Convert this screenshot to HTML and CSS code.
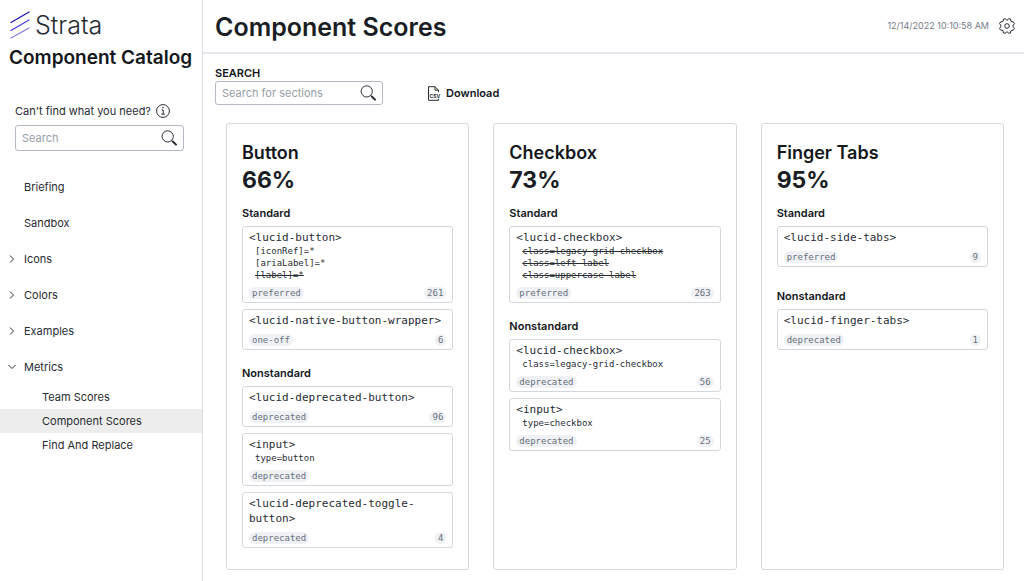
FILE: index.html
```
<!DOCTYPE html>
<html lang="en">
<head>
  <meta charset="UTF-8" />
  <meta name="viewport" content="width=device-width, initial-scale=1.0" />
  <title>Strata - Component Scores</title>
  <link rel="stylesheet" href="styles.css">
</head>
<body>

  <!-- Sidebar -->
  <aside class="sidebar">
    <div class="brand">
      <svg class="brand-mark" viewBox="0 0 20 28" fill="none" stroke-width="1.4" stroke-linecap="round">
        <path d="M1 11.5L19 1" stroke="#1f1cae" />
        <path d="M1 19.5L19 9" stroke="#4a43e6" />
        <path d="M1 27L19 17" stroke="#8580f5" />
      </svg>
      <span class="brand-name">Strata</span>
    </div>
    <h2 class="catalog-title">Component Catalog</h2>

    <div class="side-search">
      <div class="side-label">
        <label for="sideSearch">Can't find what you need?</label>
        <svg class="info-icon" viewBox="0 0 14 14" fill="none" stroke="#282c33">
          <circle cx="7" cy="7" r="6.4" />
          <path d="M5.6 6h1.6v4M5.3 10.2h3.6" />
          <circle cx="7" cy="3.8" r=".8" fill="#282c33" stroke="none" />
        </svg>
      </div>
      <div class="search-box">
        <input type="text" id="sideSearch" placeholder="Search" />
        <svg class="search-icon" viewBox="0 0 16 16" fill="none" stroke="#282c33">
          <circle cx="6.7" cy="6.4" r="5.6" />
          <path d="M10.7 10.4l1 1" />
          <path d="M11.8 11.5l3.2 3.1" stroke-width="2" stroke-linecap="round" />
        </svg>
      </div>
    </div>

    <nav>
      <ul class="nav">
        <li><a href="#">Briefing</a></li>
        <li><a href="#">Sandbox</a></li>
        <li><a href="#"><svg class="chevron" viewBox="0 0 8 8"><path d="M2 .5L5.5 4 2 7.5" /></svg>Icons</a></li>
        <li><a href="#"><svg class="chevron" viewBox="0 0 8 8"><path d="M2 .5L5.5 4 2 7.5" /></svg>Colors</a></li>
        <li><a href="#"><svg class="chevron" viewBox="0 0 8 8"><path d="M2 .5L5.5 4 2 7.5" /></svg>Examples</a></li>
        <li>
          <a href="#"><svg class="chevron" viewBox="0 0 8 8"><path d="M.5 2L4 5.5 7.5 2" /></svg>Metrics</a>
          <ul class="subnav">
            <li><a href="#">Team Scores</a></li>
            <li><a href="#" class="active">Component Scores</a></li>
            <li><a href="#">Find And Replace</a></li>
          </ul>
        </li>
      </ul>
    </nav>
  </aside>

  <div class="page">
    <header class="topbar">
      <h1>Component Scores</h1>
      <time class="timestamp">12/14/2022 10:10:58 AM</time>
      <button class="icon-btn" aria-label="Settings">
        <svg class="gear" viewBox="0 0 16 16" fill="none" stroke="#282c33" stroke-linejoin="round">
          <path d="M4.500 1L6.500.8 8 2.500 9.500.8l2 .2.5 2.500 2.500.5.900 1.500L13.800 8l1.600 2.500-.9 1.500-2.500.5-.5 2.500-2 .2L8 13.500l-1.500 1.700-2-.2-.5-2.500-2.500-.5-.9-1.500L2.200 8 .6 5.500 1.500 4 4 3.500z" />
          <circle cx="8" cy="8" r="2.3" />
        </svg>
      </button>
    </header>

    <main>
      <!-- Search and export -->
      <div class="toolbar">
        <div class="section-search">
          <label for="sectionSearch">SEARCH</label>
          <div class="search-box">
            <input type="text" id="sectionSearch" placeholder="Search for sections" />
            <svg class="search-icon" viewBox="0 0 16 16" fill="none" stroke="#282c33">
              <circle cx="6.7" cy="6.4" r="5.6" />
              <path d="M10.7 10.4l1 1" />
              <path d="M11.8 11.5l3.2 3.1" stroke-width="2" stroke-linecap="round" />
            </svg>
          </div>
        </div>
        <button class="download-btn">
          <svg class="csv-icon" viewBox="0 0 14 15">
            <path d="M1.5 13.5V.7H8l3.500 3.500v2M8 .7v3.500h3.500M1.500 13.500v.8h10v-1.500" fill="none" stroke="#282c33" />
            <text x="2.500" y="12" class="csv-text">CSV</text>
          </svg>
          Download
        </button>
      </div>

      <!-- Score cards -->
      <div class="cards">
        <section class="card">
          <h2>Button</h2>
          <p class="score">66%</p>

          <h3>Standard</h3>
          <div class="items">
            <div class="item">
              <div class="tag">&lt;lucid-button&gt;</div>
              <ul class="attrs">
                <li>[iconRef]=*</li>
                <li>[ariaLabel]=*</li>
                <li><s>[label]=*</s></li>
              </ul>
              <div class="meta"><span class="badge">preferred</span><span class="badge">261</span></div>
            </div>
            <div class="item">
              <div class="tag">&lt;lucid-native-button-wrapper&gt;</div>
              <div class="meta"><span class="badge">one-off</span><span class="badge">6</span></div>
            </div>
          </div>

          <h3>Nonstandard</h3>
          <div class="items">
            <div class="item">
              <div class="tag">&lt;lucid-deprecated-button&gt;</div>
              <div class="meta"><span class="badge">deprecated</span><span class="badge">96</span></div>
            </div>
            <div class="item">
              <div class="tag">&lt;input&gt;</div>
              <ul class="attrs">
                <li>type=button</li>
              </ul>
              <div class="meta"><span class="badge">deprecated</span></div>
            </div>
            <div class="item">
              <div class="tag">&lt;lucid-deprecated-toggle-button&gt;</div>
              <div class="meta"><span class="badge">deprecated</span><span class="badge">4</span></div>
            </div>
          </div>
        </section>

        <section class="card">
          <h2>Checkbox</h2>
          <p class="score">73%</p>

          <h3>Standard</h3>
          <div class="items">
            <div class="item">
              <div class="tag">&lt;lucid-checkbox&gt;</div>
              <ul class="attrs">
                <li><s>class=legacy-grid-checkbox</s></li>
                <li><s>class=left-label</s></li>
                <li><s>class=uppercase-label</s></li>
              </ul>
              <div class="meta"><span class="badge">preferred</span><span class="badge">263</span></div>
            </div>
          </div>

          <h3>Nonstandard</h3>
          <div class="items">
            <div class="item">
              <div class="tag">&lt;lucid-checkbox&gt;</div>
              <ul class="attrs">
                <li>class=legacy-grid-checkbox</li>
              </ul>
              <div class="meta"><span class="badge">deprecated</span><span class="badge">56</span></div>
            </div>
            <div class="item">
              <div class="tag">&lt;input&gt;</div>
              <ul class="attrs">
                <li>type=checkbox</li>
              </ul>
              <div class="meta"><span class="badge">deprecated</span><span class="badge">25</span></div>
            </div>
          </div>
        </section>

        <section class="card">
          <h2>Finger Tabs</h2>
          <p class="score">95%</p>

          <h3>Standard</h3>
          <div class="items">
            <div class="item">
              <div class="tag">&lt;lucid-side-tabs&gt;</div>
              <div class="meta"><span class="badge">preferred</span><span class="badge">9</span></div>
            </div>
          </div>

          <h3>Nonstandard</h3>
          <div class="items">
            <div class="item">
              <div class="tag">&lt;lucid-finger-tabs&gt;</div>
              <div class="meta"><span class="badge">deprecated</span><span class="badge">1</span></div>
            </div>
          </div>
        </section>
      </div>
    </main>
  </div>

</body>
</html>
```
FILE: styles.css
```
* { box-sizing: border-box; margin: 0; padding: 0; }

body {
  font-family: Inter, "Liberation Sans", sans-serif;
  font-size: 11px;
  line-height: 16px;
  color: #282c33;
  background: #fff;
  min-height: 100vh;
  display: flex;
}

ul { list-style: none; }
a { color: inherit; text-decoration: none; }
button { font: inherit; color: inherit; background: none; border: none; cursor: pointer; }
svg { display: block; flex: none; }

/* Sidebar */
.sidebar {
  flex: none;
  width: 203px;
  border-right: 1px solid #d9dde3;
}

.brand {
  display: flex;
  align-items: center;
  gap: 5px;
  padding: 8px 10px 0;
  height: 42px;
}

.brand-mark { width: 20px; height: 28px; }

.brand-name {
  font-size: 25px;
  font-weight: 300;
  line-height: 28px;
}

.catalog-title {
  padding: 4px 9px 0;
  font-size: 19px;
  font-weight: 600;
  line-height: 24px;
  color: #14171c;
  white-space: nowrap;
}

.side-search { padding: 33px 18px 18px 15px; }

.side-label {
  display: flex;
  align-items: center;
  gap: 5px;
  margin-bottom: 6px;
}

.info-icon { width: 14px; height: 14px; }

.search-box {
  display: flex;
  align-items: center;
  height: 26px;
  padding: 0 6px;
  border: 1px solid #b4bac4;
  border-radius: 3px;
}

.search-box input {
  flex: 1;
  min-width: 0;
  font: inherit;
  color: inherit;
  border: none;
  outline: none;
  background: none;
}

.search-box input::placeholder { color: #979ea8; }
.search-icon { width: 16px; height: 16px; }

.nav > li > a {
  display: flex;
  align-items: center;
  height: 36px;
  padding-left: 24px;
}

.chevron {
  width: 8px;
  height: 8px;
  margin-left: -16px;
  margin-right: 8px;
  fill: none;
  stroke: #282c33;
}

.subnav a {
  display: block;
  line-height: 24px;
  padding-left: 42px;
}

.subnav .active { background: #ededed; }

/* Page */
.page { flex: 1; min-width: 0; display: flex; flex-direction: column; }

.topbar {
  display: flex;
  align-items: center;
  height: 54px;
  padding: 0 9px 0 12px;
  border-bottom: 2px solid #e6e9ed;
}

.topbar h1 {
  flex: 1;
  padding-top: 2px;
  font-size: 25px;
  font-weight: 600;
  line-height: 32px;
  color: #1a1d23;
}

.timestamp { font-size: 9px; color: #747b86; margin-right: 10px; }
.gear { width: 16px; height: 16px; }

main {
  flex: 1;
  display: flex;
  flex-direction: column;
  padding: 11px 20px 11px 12px;
}

.toolbar { display: flex; align-items: flex-end; gap: 44px; }
.section-search { width: 168px; }

.section-search label {
  display: block;
  font-weight: 600;
  color: #14171c;
}

.section-search .search-box { height: 24px; }

.download-btn {
  display: flex;
  align-items: center;
  gap: 5px;
  height: 24px;
  font-weight: 600;
  color: #14171c;
}

.csv-icon { width: 14px; height: 15px; overflow: visible; }
.csv-text { font-size: 5px; font-weight: 700; fill: #282c33; }

/* Cards */
.cards {
  flex: 1;
  display: grid;
  grid-template-columns: repeat(3, 1fr);
  gap: 24px;
  margin: 18px 0 0 11px;
}

.card {
  min-width: 0;
  padding: 17px 15px 21px;
  border: 1px solid #d3d8df;
  border-radius: 3px;
}

.card h2 {
  font-size: 18px;
  font-weight: 600;
  line-height: 24px;
  color: #14171c;
}

.score {
  font-size: 23px;
  font-weight: 700;
  line-height: 30px;
  color: #1a1d23;
}

.card h3 {
  font-size: 11px;
  font-weight: 600;
  line-height: 16px;
  margin: 15px 0 5px;
  color: #14171c;
}

.score + h3 { margin-top: 10px; }

/* a short list still keeps some room under it */
.items { min-height: 47px; }

.item {
  padding: 3px 6px;
  border: 1px solid #d3d8df;
  border-radius: 3px;
  font-family: "DejaVu Sans Mono", monospace;
}

.item + .item { margin-top: 6px; }
.tag { font-size: 11px; line-height: 15px; }

.attrs {
  padding-left: 6px;
  font-size: 9px;
  line-height: 12px;
}

.meta {
  display: flex;
  justify-content: space-between;
  margin-top: 6px;
}

.badge {
  padding: 0 3px;
  border-radius: 6px;
  background: #eff1f4;
  color: #68707c;
  font-size: 9px;
  line-height: 12px;
}
```
